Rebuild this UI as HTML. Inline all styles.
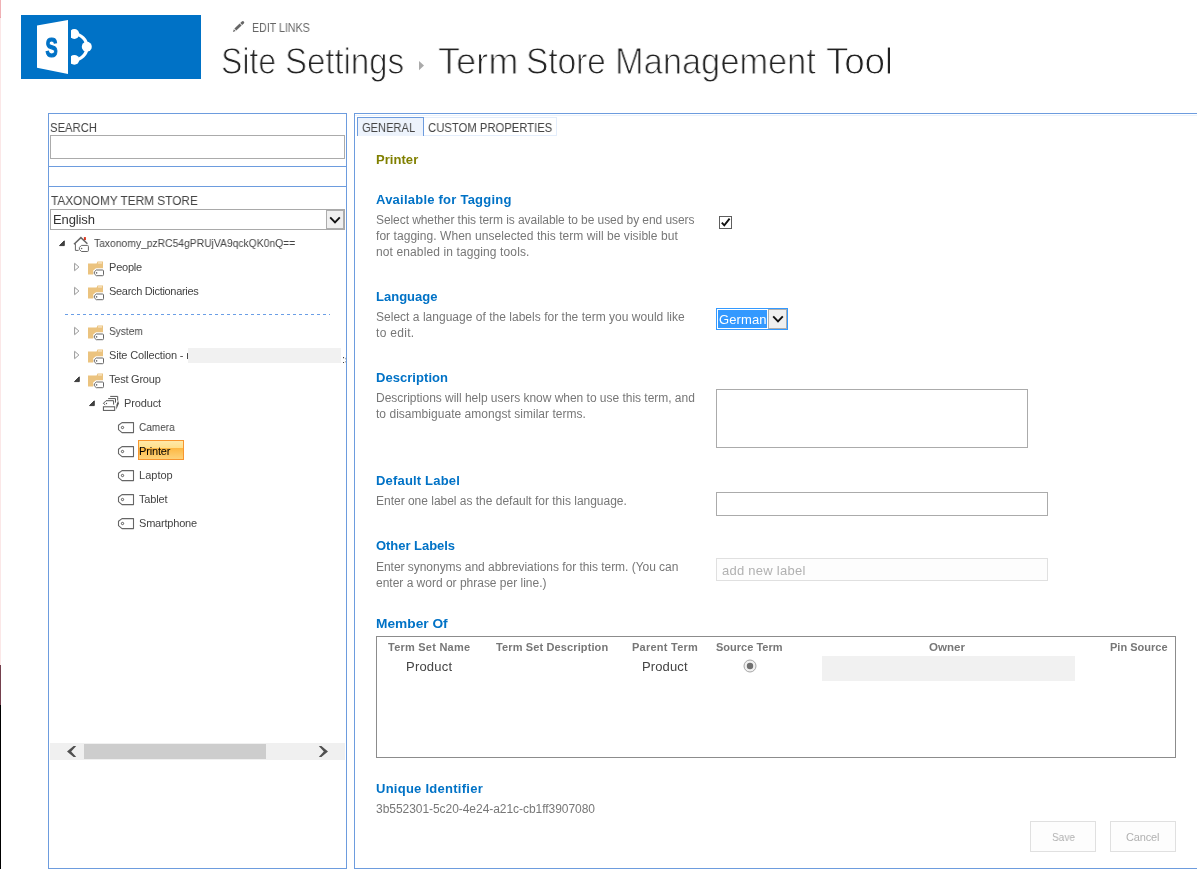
<!DOCTYPE html>
<html lang="en"><head><meta charset="utf-8"><title>Term Store Management Tool</title>
<style>
html,body{margin:0;padding:0;background:#fff;}
body{width:1197px;height:869px;position:relative;overflow:hidden;font-family:"Liberation Sans",sans-serif;}
.a{position:absolute;}
.t{position:absolute;white-space:pre;transform-origin:0 50%;will-change:transform;}
.bx{position:absolute;box-sizing:border-box;}
svg{position:absolute;overflow:visible;}
</style></head>
<body>
<div class="bx" style="left:0px;top:0px;width:1px;height:18px;background:linear-gradient(#f0b1b5 0,#f0b1b5 90%,#e89fa8 100%);"></div>
<div class="bx" style="left:0px;top:18px;width:1px;height:647px;background:#fbe7e7;"></div>
<div class="bx" style="left:0px;top:665px;width:1px;height:40px;background:#74404d;"></div>
<div class="bx" style="left:0px;top:705px;width:1px;height:164px;background:#000;"></div>
<svg style="left:21px;top:15px;will-change:transform" width="180" height="64" viewBox="21 15 180 64">
<rect x="21" y="15" width="180" height="64" fill="#0072c6"/>
<polygon points="37,25.4 68,19.9 68,74 37,67.8" fill="#fff"/>
<g fill="none" stroke="#fff" stroke-width="3.2"><path d="M74,34 A13,13 0 0 1 74,60"/></g>
<circle cx="74.3" cy="34" r="4.9" fill="#fff"/><circle cx="86.8" cy="46.7" r="5" fill="#fff"/><circle cx="74.3" cy="59.8" r="4.9" fill="#fff"/>
<rect x="68" y="25" width="3" height="42" fill="#0072c6"/>
<text transform="translate(51.5,56.8) scale(0.66,1)" x="0" y="0" text-anchor="middle" font-family="Liberation Sans, sans-serif" font-weight="700" font-size="27.8" fill="#0072c6" stroke="#0072c6" stroke-width="1.2">S</text>
</svg>
<svg style="left:226px;top:14px" width="40" height="26" viewBox="226 14 40 26">
<g transform="translate(232.9,31.9) rotate(-43.7)" fill="#666">
<polygon points="0,0 2.6,-1.3 2.6,1.3"/>
<rect x="3.4" y="-1.4" width="7.3" height="2.8"/>
<path d="M11.5,-1.4 h2.2 a1.4,1.4 0 0 1 0,2.8 h-2.2z"/>
</g></svg>
<svg style="left:418px;top:60px" width="8" height="12" viewBox="418 60 8 12"><polygon points="419,61 424,65.6 419,70.2" fill="#aaa"/></svg>
<div class="bx" style="left:48px;top:113px;width:299px;height:756px;border:1px solid #6d9cde;"></div>
<div class="bx" style="left:49px;top:166px;width:297px;height:1px;background:#6d9cde;"></div>
<div class="bx" style="left:49px;top:186px;width:297px;height:1px;background:#6d9cde;"></div>
<div class="bx" style="left:50px;top:135px;width:295px;height:24px;border:1px solid #ababab;background:#fff;"></div>
<div class="bx" style="left:50px;top:209px;width:295px;height:21px;border:1px solid #a9a9a9;background:#fff;"></div>
<div class="bx" style="left:326px;top:210px;width:18px;height:19px;border:1px solid #adadad;background:#f0f0f0;"></div>
<svg style="left:326px;top:210.5px" width="18" height="18" viewBox="0 0 18 18"><path d="M4.2,6.3 L9,11.3 L13.8,6.3" fill="none" stroke="#111" stroke-width="1.9"/></svg>
<svg style="left:58.1px;top:238.9px" width="8" height="8" viewBox="0 0 8 8"><polygon points="1.5,6.6 6.3,1.8 6.3,6.6" fill="#444" stroke="#222" stroke-width="0.8" stroke-linejoin="round"/></svg>
<svg style="left:73px;top:236px" width="17" height="17" viewBox="73 236 17 17">
<rect x="83.9" y="237.1" width="2" height="3" fill="#d9341c"/>
<path d="M74,244.3 L80.9,237.6 L87.4,243.7" fill="none" stroke="#666" stroke-width="1.5"/>
<path d="M75.4,243.5 V250.4 H78.6" fill="none" stroke="#666" stroke-width="1"/>
<path d="M81.4,245.4 h6 a1,1 0 0 1 1,1 v4.1 a1,1 0 0 1 -1,1 h-6 l-2,-2 v-2.1z" fill="#fff" stroke="#666" stroke-width="1"/>
<circle cx="81.6" cy="248.5" r="0.8" fill="#666"/>
</svg>
<svg style="left:74px;top:262.45px" width="8" height="10" viewBox="0 0 8 10"><polygon points="0.6,1.3 4.9,5 0.6,8.7" fill="#fff" stroke="#999" stroke-width="1"/></svg>
<svg style="left:88px;top:260.5px" width="17" height="16" viewBox="88 260.5 17 16">
<path d="M88,263 h8.6 l0.9,-2 h5.5 v6.7 h-7 l-2.8,2.4 v3.8 h-5.2z" fill="#ebc37f"/>
<rect x="98" y="262" width="4" height="0.9" fill="#fff6e6"/>
<path d="M96.3,269.5 h6.2 a1,1 0 0 1 1,1 v3.7 a1,1 0 0 1 -1,1 h-6.2 l-2,-1.9 v-1.9z" fill="#fff" stroke="#666" stroke-width="1"/>
<circle cx="96.6" cy="272.4" r="0.8" fill="#666"/>
</svg>
<svg style="left:74px;top:286.45px" width="8" height="10" viewBox="0 0 8 10"><polygon points="0.6,1.3 4.9,5 0.6,8.7" fill="#fff" stroke="#999" stroke-width="1"/></svg>
<svg style="left:88px;top:284.5px" width="17" height="16" viewBox="88 260.5 17 16">
<path d="M88,263 h8.6 l0.9,-2 h5.5 v6.7 h-7 l-2.8,2.4 v3.8 h-5.2z" fill="#ebc37f"/>
<rect x="98" y="262" width="4" height="0.9" fill="#fff6e6"/>
<path d="M96.3,269.5 h6.2 a1,1 0 0 1 1,1 v3.7 a1,1 0 0 1 -1,1 h-6.2 l-2,-1.9 v-1.9z" fill="#fff" stroke="#666" stroke-width="1"/>
<circle cx="96.6" cy="272.4" r="0.8" fill="#666"/>
</svg>
<svg style="left:74px;top:326.45px" width="8" height="10" viewBox="0 0 8 10"><polygon points="0.6,1.3 4.9,5 0.6,8.7" fill="#fff" stroke="#999" stroke-width="1"/></svg>
<svg style="left:88px;top:324.5px" width="17" height="16" viewBox="88 260.5 17 16">
<path d="M88,263 h8.6 l0.9,-2 h5.5 v6.7 h-7 l-2.8,2.4 v3.8 h-5.2z" fill="#ebc37f"/>
<rect x="98" y="262" width="4" height="0.9" fill="#fff6e6"/>
<path d="M96.3,269.5 h6.2 a1,1 0 0 1 1,1 v3.7 a1,1 0 0 1 -1,1 h-6.2 l-2,-1.9 v-1.9z" fill="#fff" stroke="#666" stroke-width="1"/>
<circle cx="96.6" cy="272.4" r="0.8" fill="#666"/>
</svg>
<svg style="left:74px;top:350.45px" width="8" height="10" viewBox="0 0 8 10"><polygon points="0.6,1.3 4.9,5 0.6,8.7" fill="#fff" stroke="#999" stroke-width="1"/></svg>
<svg style="left:88px;top:348.5px" width="17" height="16" viewBox="88 260.5 17 16">
<path d="M88,263 h8.6 l0.9,-2 h5.5 v6.7 h-7 l-2.8,2.4 v3.8 h-5.2z" fill="#ebc37f"/>
<rect x="98" y="262" width="4" height="0.9" fill="#fff6e6"/>
<path d="M96.3,269.5 h6.2 a1,1 0 0 1 1,1 v3.7 a1,1 0 0 1 -1,1 h-6.2 l-2,-1.9 v-1.9z" fill="#fff" stroke="#666" stroke-width="1"/>
<circle cx="96.6" cy="272.4" r="0.8" fill="#666"/>
</svg>
<svg style="left:73.1px;top:374.9px" width="8" height="8" viewBox="0 0 8 8"><polygon points="1.5,6.6 6.3,1.8 6.3,6.6" fill="#444" stroke="#222" stroke-width="0.8" stroke-linejoin="round"/></svg>
<svg style="left:88px;top:372.5px" width="17" height="16" viewBox="88 260.5 17 16">
<path d="M88,263 h8.6 l0.9,-2 h5.5 v6.7 h-7 l-2.8,2.4 v3.8 h-5.2z" fill="#ebc37f"/>
<rect x="98" y="262" width="4" height="0.9" fill="#fff6e6"/>
<path d="M96.3,269.5 h6.2 a1,1 0 0 1 1,1 v3.7 a1,1 0 0 1 -1,1 h-6.2 l-2,-1.9 v-1.9z" fill="#fff" stroke="#666" stroke-width="1"/>
<circle cx="96.6" cy="272.4" r="0.8" fill="#666"/>
</svg>
<svg style="left:88.1px;top:398.9px" width="8" height="8" viewBox="0 0 8 8"><polygon points="1.5,6.6 6.3,1.8 6.3,6.6" fill="#444" stroke="#222" stroke-width="0.8" stroke-linejoin="round"/></svg>
<svg style="left:102px;top:395px" width="18" height="17" viewBox="102 395 18 17">
<g fill="none" stroke="#555" stroke-width="1">
<path d="M110.2,396.4 H117.7 V400.6"/>
<path d="M108.2,398.6 H115.5 V402.6"/>
<path d="M105.2,404.8 L103.4,403.4 L106,400.7 H113.6 V404.6"/>
<rect x="103.4" y="406.8" width="11.3" height="3.6"/>
</g>
<circle cx="106.5" cy="403.5" r="0.7" fill="#555"/>
<polygon points="118.1,400.6 118.9,403.5 116.2,409.8 116.4,405" fill="#555"/>
</svg>
<svg style="left:118px;top:422px" width="17" height="12" viewBox="118 422 17 12">
<path d="M122,422.6 h11.5 v10 h-11.5 l-3.5,-2.9 v-4.4z" fill="#fff" stroke="#666" stroke-width="1.1" stroke-linejoin="round"/>
<circle cx="122.5" cy="427.5" r="1.15" fill="none" stroke="#555" stroke-width="1"/>
</svg>
<svg style="left:118px;top:446px" width="17" height="12" viewBox="118 422 17 12">
<path d="M122,422.6 h11.5 v10 h-11.5 l-3.5,-2.9 v-4.4z" fill="#fff" stroke="#666" stroke-width="1.1" stroke-linejoin="round"/>
<circle cx="122.5" cy="427.5" r="1.15" fill="none" stroke="#555" stroke-width="1"/>
</svg>
<svg style="left:118px;top:470px" width="17" height="12" viewBox="118 422 17 12">
<path d="M122,422.6 h11.5 v10 h-11.5 l-3.5,-2.9 v-4.4z" fill="#fff" stroke="#666" stroke-width="1.1" stroke-linejoin="round"/>
<circle cx="122.5" cy="427.5" r="1.15" fill="none" stroke="#555" stroke-width="1"/>
</svg>
<svg style="left:118px;top:494px" width="17" height="12" viewBox="118 422 17 12">
<path d="M122,422.6 h11.5 v10 h-11.5 l-3.5,-2.9 v-4.4z" fill="#fff" stroke="#666" stroke-width="1.1" stroke-linejoin="round"/>
<circle cx="122.5" cy="427.5" r="1.15" fill="none" stroke="#555" stroke-width="1"/>
</svg>
<svg style="left:118px;top:518px" width="17" height="12" viewBox="118 422 17 12">
<path d="M122,422.6 h11.5 v10 h-11.5 l-3.5,-2.9 v-4.4z" fill="#fff" stroke="#666" stroke-width="1.1" stroke-linejoin="round"/>
<circle cx="122.5" cy="427.5" r="1.15" fill="none" stroke="#555" stroke-width="1"/>
</svg>
<div class="bx" style="left:65px;top:314px;width:265px;height:1px;background:repeating-linear-gradient(90deg,#6a9ee6 0 3px,#fff 3px 6px);"></div>
<div class="t" style="left:342px;top:352px;font-size:11px;line-height:14px;color:#444;width:4px;overflow:hidden;">:s</div>
<div class="bx" style="left:138px;top:440px;width:46px;height:20px;border:1px solid #f7962f;background:linear-gradient(#ffe9a8 0,#ffe08c 38%,#fdb843 40%,#fdd27a 100%);"></div>
<div class="bx" style="left:50px;top:743px;width:295px;height:17px;background:#f0f0f0;"></div>
<div class="bx" style="left:84px;top:744px;width:182px;height:15px;background:#cdcdcd;"></div>
<svg style="left:50px;top:743px" width="295" height="17" viewBox="50 743 295 17"><g fill="#505050"><polygon points="67,751.5 73.6,746 76.2,746 71.2,751.5 76.2,757 73.6,757"/><polygon points="328,751.5 321.4,746 318.8,746 323.8,751.5 318.8,757 321.4,757"/></g></svg>
<div class="bx" style="left:354px;top:113px;width:846px;height:756px;border:1px solid #6d9cde;"></div>
<div class="bx" style="left:355px;top:115px;width:842px;height:1px;background:#eaf2fc;"></div>
<div class="bx" style="left:423px;top:117px;width:134px;height:19px;border:1px solid #e3edfb;background:#fff;"></div>
<div class="bx" style="left:357px;top:117px;width:67px;height:19px;border:1px solid #6d9cde;border-bottom:none;background:#edf3fc;"></div>
<div class="bx" style="left:719px;top:216px;width:13px;height:13px;border:1px solid #5e5e5e;background:#fff;"></div>
<svg style="left:719px;top:216px" width="13" height="13" viewBox="0 0 13 13"><path d="M2.8,6.6 L5.3,9.3 L10.6,2.6" fill="none" stroke="#111" stroke-width="1.9"/></svg>
<div class="bx" style="left:716px;top:308px;width:72px;height:22px;border:1px solid #3399ff;background:#fff;"></div>
<div class="bx" style="left:718px;top:310px;width:49px;height:18px;background:#3399ff;"></div>
<div class="bx" style="left:768px;top:309px;width:19px;height:20px;border:1px solid #adadad;background:#f0f0f0;"></div>
<svg style="left:768.5px;top:310px" width="18" height="18" viewBox="0 0 18 18"><path d="M4.2,6.3 L9,11.3 L13.8,6.3" fill="none" stroke="#111" stroke-width="1.9"/></svg>
<div class="bx" style="left:716px;top:389px;width:312px;height:59px;border:1px solid #ababab;background:#fff;"></div>
<div class="bx" style="left:716px;top:492px;width:332px;height:24px;border:1px solid #ababab;background:#fff;"></div>
<div class="bx" style="left:716px;top:558px;width:332px;height:23px;border:1px solid #e0e0e0;background:#fdfdfd;"></div>
<div class="bx" style="left:376px;top:636px;width:800px;height:122px;border:1px solid #8c8c8c;"></div>
<div class="bx" style="left:822px;top:656px;width:253px;height:25px;background:#f1f1f1;"></div>
<svg style="left:742.5px;top:659.4px" width="14" height="14" viewBox="0 0 14 14"><circle cx="7" cy="7" r="6" fill="#f1f1f1" stroke="#a6a6a6" stroke-width="1"/><circle cx="7" cy="7" r="3.2" fill="#707070"/></svg>
<div class="bx" style="left:1030px;top:821px;width:66px;height:31px;border:1px solid #e0e0e0;background:#fdfdfd;"></div>
<div class="bx" style="left:1110px;top:821px;width:66px;height:31px;border:1px solid #e0e0e0;background:#fdfdfd;"></div>
<div class="t" style="left:251.71px;top:21px;font-size:12px;line-height:15px;transform:scaleX(0.8850);color:#666;">EDIT LINKS</div>
<div class="t" style="left:221.06px;top:39px;font-size:37px;line-height:46px;transform:scaleX(0.8624);color:#222;-webkit-text-stroke:1px #fff;">Site</div>
<div class="t" style="left:285.20px;top:39px;font-size:37px;line-height:46px;transform:scaleX(0.8903);color:#222;-webkit-text-stroke:1px #fff;">Settings</div>
<div class="t" style="left:438.38px;top:39px;font-size:37px;line-height:46px;transform:scaleX(0.9769);color:#222;-webkit-text-stroke:1px #fff;">Term</div>
<div class="t" style="left:526.17px;top:39px;font-size:37px;line-height:46px;transform:scaleX(0.9024);color:#222;-webkit-text-stroke:1px #fff;">Store</div>
<div class="t" style="left:615.25px;top:39px;font-size:37px;line-height:46px;transform:scaleX(0.9299);color:#222;-webkit-text-stroke:1px #fff;">Management</div>
<div class="t" style="left:826.15px;top:39px;font-size:37px;line-height:46px;letter-spacing:-0.317px;color:#222;-webkit-text-stroke:1px #fff;">Tool</div>
<div class="t" style="left:50.35px;top:120px;font-size:13px;line-height:16px;transform:scaleX(0.8667);color:#444;">SEARCH</div>
<div class="t" style="left:50.77px;top:193px;font-size:13px;line-height:16px;transform:scaleX(0.9082);color:#444;">TAXONOMY TERM STORE</div>
<div class="t" style="left:52.60px;top:212px;font-size:13px;line-height:16px;letter-spacing:-0.125px;color:#333;">English</div>
<div class="t" style="left:94.17px;top:236px;font-size:11px;line-height:14px;transform:scaleX(0.9385);color:#444;">Taxonomy_pzRC54gPRUjVA9qckQK0nQ==</div>
<div class="t" style="left:108.50px;top:260px;font-size:11px;line-height:14px;letter-spacing:-0.210px;color:#444;">People</div>
<div class="t" style="left:109.00px;top:284px;font-size:11px;line-height:14px;letter-spacing:-0.311px;color:#444;">Search Dictionaries</div>
<div class="t" style="left:109.04px;top:324px;font-size:11px;line-height:14px;transform:scaleX(0.9211);color:#444;">System</div>
<div class="t" style="left:109.00px;top:348px;font-size:11px;line-height:14px;letter-spacing:-0.161px;color:#444;">Site Collection - r</div>
<div class="t" style="left:109.25px;top:372px;font-size:11px;line-height:14px;letter-spacing:-0.228px;color:#444;">Test Group</div>
<div class="t" style="left:123.50px;top:396px;font-size:11px;line-height:14px;letter-spacing:-0.133px;color:#444;">Product</div>
<div class="t" style="left:138.84px;top:420px;font-size:11px;line-height:14px;transform:scaleX(0.9135);color:#444;">Camera</div>
<div class="t" style="left:138.50px;top:444px;font-size:11px;line-height:14px;letter-spacing:-0.158px;color:#000;">Printer</div>
<div class="t" style="left:138.50px;top:468px;font-size:11px;line-height:14px;letter-spacing:0.010px;color:#444;">Laptop</div>
<div class="t" style="left:139.25px;top:492px;font-size:11px;line-height:14px;letter-spacing:-0.140px;color:#444;">Tablet</div>
<div class="t" style="left:139.00px;top:516px;font-size:11px;line-height:14px;letter-spacing:-0.200px;color:#444;">Smartphone</div>
<div class="t" style="left:361.66px;top:120px;font-size:13px;line-height:16px;transform:scaleX(0.8541);color:#444;">GENERAL</div>
<div class="t" style="left:428.35px;top:120px;font-size:13px;line-height:16px;transform:scaleX(0.8676);color:#444;">CUSTOM PROPERTIES</div>
<div class="t" style="left:375.95px;top:152px;font-size:13px;line-height:16px;letter-spacing:0.050px;color:#808000;font-weight:700;">Printer</div>
<div class="t" style="left:375.95px;top:192px;font-size:13px;line-height:16px;letter-spacing:0.233px;color:#0072c6;font-weight:700;">Available for Tagging</div>
<div class="t" style="left:375.80px;top:213px;font-size:12px;line-height:15px;letter-spacing:-0.073px;color:#777;">Select whether this term is available to be used by end users</div>
<div class="t" style="left:376.05px;top:229px;font-size:12px;line-height:15px;letter-spacing:0.051px;color:#777;">for tagging. When unselected this term will be visible but</div>
<div class="t" style="left:375.75px;top:245px;font-size:12px;line-height:15px;letter-spacing:0.116px;color:#777;">not enabled in tagging tools.</div>
<div class="t" style="left:375.95px;top:289px;font-size:13px;line-height:16px;letter-spacing:0.007px;color:#0072c6;font-weight:700;">Language</div>
<div class="t" style="left:375.80px;top:310px;font-size:12px;line-height:15px;letter-spacing:0.021px;color:#777;">Select a language of the labels for the term you would like</div>
<div class="t" style="left:376.05px;top:326px;font-size:12px;line-height:15px;letter-spacing:0.307px;color:#777;">to edit.</div>
<div class="t" style="left:718.75px;top:312px;font-size:13px;line-height:16px;letter-spacing:0.100px;color:#fff;">German</div>
<div class="t" style="left:376.10px;top:370px;font-size:13px;line-height:16px;letter-spacing:0.045px;color:#0072c6;font-weight:700;">Description</div>
<div class="t" style="left:375.70px;top:391px;font-size:12px;line-height:15px;letter-spacing:-0.022px;color:#777;">Descriptions will help users know when to use this term, and</div>
<div class="t" style="left:376.05px;top:407px;font-size:12px;line-height:15px;letter-spacing:0.032px;color:#777;">to disambiguate amongst similar terms.</div>
<div class="t" style="left:376.10px;top:473px;font-size:13px;line-height:16px;letter-spacing:0.179px;color:#0072c6;font-weight:700;">Default Label</div>
<div class="t" style="left:375.85px;top:494px;font-size:12px;line-height:15px;letter-spacing:-0.014px;color:#777;">Enter one label as the default for this language.</div>
<div class="t" style="left:375.80px;top:538px;font-size:13px;line-height:16px;letter-spacing:-0.036px;color:#0072c6;font-weight:700;">Other Labels</div>
<div class="t" style="left:375.70px;top:560px;font-size:12px;line-height:15px;letter-spacing:-0.037px;color:#777;">Enter synonyms and abbreviations for this term. (You can</div>
<div class="t" style="left:375.60px;top:576px;font-size:12px;line-height:15px;letter-spacing:-0.009px;color:#777;">enter a word or phrase per line.)</div>
<div class="t" style="left:721.50px;top:563px;font-size:13px;line-height:16px;letter-spacing:0.254px;color:#b1b1b1;">add new label</div>
<div class="t" style="left:376.11px;top:616px;font-size:13px;line-height:16px;transform:scaleX(1.0558);color:#0072c6;font-weight:700;">Member Of</div>
<div class="t" style="left:388.20px;top:640px;font-size:11px;line-height:14px;letter-spacing:0.233px;color:#777;font-weight:700;">Term Set Name</div>
<div class="t" style="left:496.30px;top:640px;font-size:11px;line-height:14px;letter-spacing:0.124px;color:#777;font-weight:700;">Term Set Description</div>
<div class="t" style="left:631.75px;top:640px;font-size:11px;line-height:14px;letter-spacing:0.250px;color:#777;font-weight:700;">Parent Term</div>
<div class="t" style="left:716.45px;top:640px;font-size:11px;line-height:14px;letter-spacing:0.010px;color:#777;font-weight:700;">Source Term</div>
<div class="t" style="left:929.27px;top:640px;font-size:11px;line-height:14px;transform:scaleX(1.0507);color:#777;font-weight:700;">Owner</div>
<div class="t" style="left:1109.95px;top:640px;font-size:11px;line-height:14px;letter-spacing:0.006px;color:#777;font-weight:700;">Pin Source</div>
<div class="t" style="left:405.80px;top:659px;font-size:13px;line-height:16px;letter-spacing:0.208px;color:#444;">Product</div>
<div class="t" style="left:642.00px;top:659px;font-size:13px;line-height:16px;letter-spacing:0.125px;color:#444;">Product</div>
<div class="t" style="left:375.75px;top:781px;font-size:13px;line-height:16px;letter-spacing:0.259px;color:#0072c6;font-weight:700;">Unique Identifier</div>
<div class="t" style="left:375.60px;top:802px;font-size:12px;line-height:15px;letter-spacing:-0.047px;color:#777;">3b552301-5c20-4e24-a21c-cb1ff3907080</div>
<div class="t" style="left:1051.94px;top:830px;font-size:11px;line-height:14px;transform:scaleX(0.9167);color:#b1b1b1;">Save</div>
<div class="t" style="left:1126.30px;top:830px;font-size:11px;line-height:14px;letter-spacing:-0.160px;color:#b1b1b1;">Cancel</div>
<div class="bx" style="left:188px;top:348px;width:153px;height:15px;background:#f1f1f1;"></div>
</body></html>
